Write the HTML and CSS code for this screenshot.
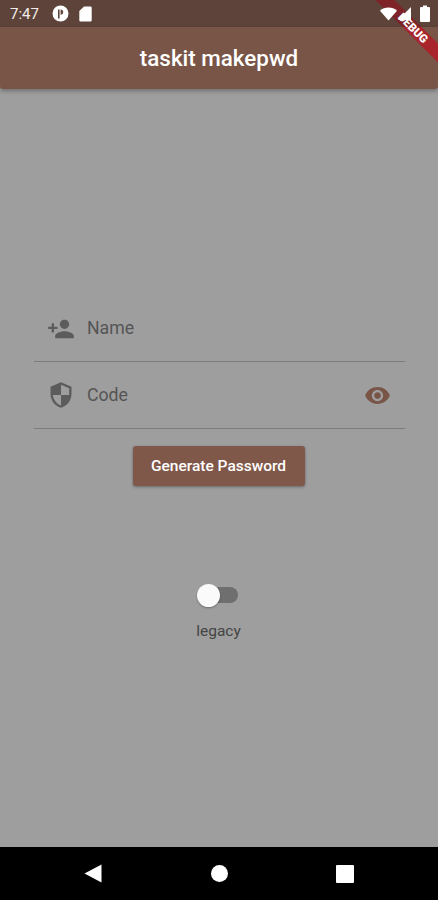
FILE: index.html
```html
<!DOCTYPE html>
<html lang="en">
<head>
    <meta charset="UTF-8">
    <meta name="viewport" content="width=device-width, initial-scale=1.0">
    <title>taskit makepwd</title>
    <link rel="stylesheet" href="styles.css">
</head>
<body>
    <svg class="debug-ribbon" width="65" height="65" viewBox="0 0 65 65">
        <polygon class="ribbon-dark" points="2.500,0 21.500,0 48.500,27 29.500,27"/>
        <polygon class="ribbon-band" points="29.500,27 48.500,27 65,43.500 65,62.500"/>
    </svg>
    <div class="status-bar">
        <div class="status-left">
            <span class="clock">7:47</span>
            <svg class="status-icon" width="17" height="17" viewBox="0 0 17 17"><path fill-rule="evenodd" fill="#fff" d="M8.500 0.500a8 8 0 1 0 0 16a8 8 0 0 0 0-16zM6 4.500h1.600v9H6zM8.600 4.500a2.600 2.600 0 0 1 0 5.200z"/></svg>
            <svg class="status-icon" width="13" height="16" viewBox="0 0 13 16"><path fill="#fff" d="M5 0.500h6.500a1.200 1.200 0 0 1 1.200 1.200v12.600a1.200 1.200 0 0 1-1.200 1.200h-10a1.200 1.200 0 0 1-1.200-1.200V5z"/></svg>
        </div>
        <div class="status-right">
            <svg class="wifi" width="17" height="14" viewBox="0 0 18 14"><path fill="#fff" d="M0 3.500C2.400 1.400 5.500 0.200 9 0.200s6.600 1.200 9 3.300L9 14z"/></svg>
            <svg class="signal" width="13" height="15" viewBox="0 0 14 15"><path fill="#fff" d="M14 0.500V14.500H0z"/></svg>
            <svg width="10" height="17" viewBox="0 0 10 17"><path fill="#fff" d="M3 0.500h4V2h2a1 1 0 0 1 1 1v13a1 1 0 0 1-1 1H1a1 1 0 0 1-1-1V3a1 1 0 0 1 1-1h2z"/></svg>
        </div>
    </div>
    <header class="app-bar">taskit makepwd</header>
    <svg class="debug-text" width="65" height="65" viewBox="0 0 65 65">
        <text x="0" y="4" transform="translate(40 28) rotate(45)" text-anchor="middle">DEBUG</text>
    </svg>

    <main class="content">
        <div class="field">
            <svg class="field-icon person" width="28" height="28" viewBox="0 0 24 24"><path d="M15 12c2.210 0 4-1.790 4-4s-1.790-4-4-4-4 1.790-4 4 1.790 4 4 4zm-9-2V7H4v3H1v2h3v3h2v-3h3v-2H6zm9 4c-2.670 0-8 1.340-8 4v2h16v-2c0-2.660-5.330-4-8-4z"/></svg>
            <span class="field-label">Name</span>
        </div>
        <div class="field">
            <svg class="field-icon" width="28" height="28" viewBox="0 0 24 24"><path d="M12 1L21 5v6c0 5.550-3.840 10.740-9 12-5.160-1.260-9-6.450-9-12V5l9-4zm0 10.990H5c.53 4.120 3.280 7.790 7 8.940V12h7V6.300l-7-3.110v8.800z"/></svg>
            <span class="field-label">Code</span>
            <svg class="eye-icon" width="27" height="27" viewBox="0 0 24 24"><path d="M12 4.500C7 4.500 2.730 7.610 1 12c1.730 4.390 6 7.500 11 7.500s9.270-3.110 11-7.500c-1.730-4.390-6-7.500-11-7.500zM12 17c-2.760 0-5-2.240-5-5s2.240-5 5-5 5 2.240 5 5-2.240 5-5 5zm0-8c-1.660 0-3 1.340-3 3s1.340 3 3 3 3-1.340 3-3-1.340-3-3-3z"/></svg>
        </div>
        <button class="generate">Generate Password</button>
        <div class="toggle">
            <span class="switch"><span class="thumb"></span></span>
            <span class="toggle-label">legacy</span>
        </div>
    </main>

    <nav class="nav-bar">
        <svg width="18" height="19" viewBox="0 0 18 19"><path fill="#fff" d="M17.500 0.500V18.500L0.500 9.500z"/></svg>
        <span class="nav-home"></span>
        <span class="nav-recent"></span>
    </nav>
</body>
</html>
```

FILE: styles.css
```css
html, body {
    height: 100%;
}
body {
    font-family: Roboto, "Liberation Sans", sans-serif;
    margin: 0;
    padding: 0;
    background: #9e9e9e;
    color: #4a4a4a;
    display: flex;
    flex-direction: column;
    min-height: 100vh;
    position: relative;
    overflow: hidden;
}
.status-bar {
    background: #5d4339;
    height: 27px;
    flex: none;
    display: flex;
    justify-content: space-between;
    align-items: center;
    padding: 0 8px 0 10px;
    color: #fff;
}
.status-left {
    display: flex;
    align-items: center;
}
.clock {
    font-size: 15px;
    margin-right: 13px;
    color: #f3eeec;
}
.status-icon {
    margin-right: 10px;
}
/* sits above the ribbon, the text goes over it again */
.status-right {
    display: flex;
    align-items: center;
    position: relative;
    z-index: 3;
}
.wifi {
    margin-right: 1px;
}
.signal {
    margin-right: 9px;
}
.app-bar {
    background: #795548;
    height: 62px;
    flex: none;
    display: flex;
    align-items: center;
    justify-content: center;
    color: #fff;
    font-size: 22.4px;
    font-weight: 500;
    box-shadow: 0 2px 4px rgba(0, 0, 0, 0.3);
    border-radius: 0 0 3px 3px;
}
.content {
    flex: 1;
    display: flex;
    flex-direction: column;
    align-items: center;
    padding: 206px 33px 0 34px;
}
.field {
    align-self: stretch;
    height: 66px;
    border-bottom: 1.5px solid #7c7c7c;
    display: flex;
    align-items: center;
    padding: 0 14px 0 13px;
}
.field-icon {
    fill: #5c5c5c;
    flex: none;
}
.person {
    margin-top: 2px;
}
.field-label {
    font-size: 17.7px;
    margin-left: 12px;
    color: #555;
    flex: 1;
}
.eye-icon {
    fill: #795548;
    flex: none;
}
.generate {
    margin: 17px 2px 0 0;
    width: 172px;
    height: 40px;
    border: none;
    border-radius: 3px;
    background: #80584a;
    color: #fff;
    font-family: inherit;
    font-size: 15.5px;
    font-weight: 500;
    padding: 0;
    box-shadow: 0 1px 3px rgba(0, 0, 0, 0.35);
}
.toggle {
    margin: 97px 2px 0 0;
    display: flex;
    flex-direction: column;
    align-items: center;
}
.switch {
    display: flex;
    align-items: center;
    width: 40px;
    height: 16px;
    background: #6f6f6f;
    border-radius: 8px;
    margin: 4px 0;
}
.thumb {
    width: 23px;
    height: 23px;
    border-radius: 50%;
    background: #fafafa;
    margin-left: -1px;
    flex: none;
    box-shadow: 0 1px 2px rgba(0, 0, 0, 0.3);
}
.toggle-label {
    margin-top: 15px;
    font-size: 15.5px;
    color: #444;
}
.nav-bar {
    background: #000;
    height: 53px;
    flex: none;
    display: flex;
    align-items: center;
    justify-content: space-between;
    padding: 0 84px;
}
.nav-home {
    width: 17px;
    height: 17px;
    border-radius: 50%;
    background: #fff;
}
.nav-recent {
    width: 18px;
    height: 18px;
    border-radius: 1px;
    background: #fff;
}
/* flutter debug banner, drawn in two layers */
.debug-ribbon, .debug-text {
    position: absolute;
    top: 0;
    right: 0;
}
.debug-ribbon {
    z-index: 2;
}
.debug-text {
    z-index: 4;
}
.ribbon-dark {
    fill: #7e2328;
}
.ribbon-band {
    fill: #a8252b;
}
.debug-text text {
    fill: #fff;
    font-family: Roboto, sans-serif;
    font-size: 11.5px;
    font-weight: 900;
}
```
